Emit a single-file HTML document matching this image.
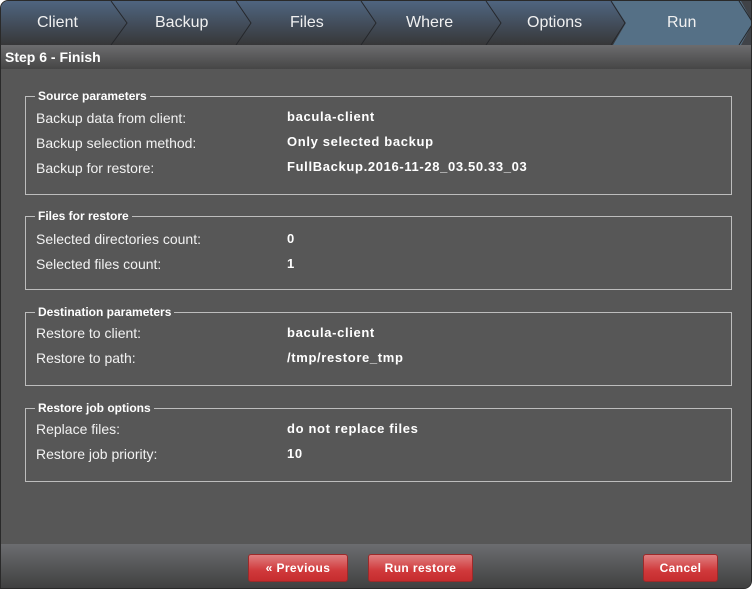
<!DOCTYPE html>
<html><head><style>
*{margin:0;padding:0;box-sizing:border-box}
body{width:753px;height:589px;background:#fff;font-family:"Liberation Sans",sans-serif;overflow:hidden;position:relative}
#win{position:absolute;left:0;top:0;width:752px;height:589px;background:#575757;border:1px solid #2a2a2a;border-radius:8px 0 8px 0;overflow:hidden}
#tabs{position:absolute;left:0;top:0;width:752px;height:44px}
#hdr{position:absolute;left:0;top:44px;width:752px;height:24px;background:linear-gradient(#6c6c6e,#464646);color:#fff;font-weight:bold;font-size:14px;padding:4px 0 0 4px}
.fs{position:absolute;left:24px;width:707px;border:1px solid #bdbdbd}
.lg{position:absolute;top:-9px;left:9px;background:#575757;padding:0 3px;color:#fff;font-weight:bold;font-size:12px;line-height:16px}
.row{position:absolute;left:10px;color:#f2f2f2;font-size:14px;line-height:16px}
.v{position:absolute;left:261px;color:#fff;font-weight:bold;font-size:13px;line-height:16px;white-space:nowrap;letter-spacing:0.65px}
#foot{position:absolute;left:0;top:543px;width:752px;height:46px;background:linear-gradient(#6c6d70,#3e3e3e)}
.btn{position:absolute;top:10px;height:28px;border:1px solid #9c2a2a;border-radius:3px;background:linear-gradient(#e07f80,#d0393b 60%,#c62c2e);color:#fff;font-weight:bold;font-size:12px;letter-spacing:0.4px;text-align:center;line-height:26px}
</style></head><body>
<div id="win">
<svg id="tabs" width="752" height="44">
<defs><linearGradient id="g" x1="0" y1="0" x2="0" y2="1"><stop offset="0" stop-color="#4f6580"/><stop offset="1" stop-color="#373738"/></linearGradient></defs>
<rect width="752" height="44" fill="url(#g)"/>
<polygon points="611,0 745,0 752,0 752,44 625,44 612,44 625,22" fill="#557086"/>
<polygon points="740,0 752,0 752,44 740,44 752,22" fill="#404348"/>
<g stroke="#25272b" stroke-width="1" fill="none">
<path d="M110,0 L126,22 L110,44"/><path d="M235,0 L250,22 L235,44"/><path d="M360,0 L375,22 L360,44"/><path d="M485,0 L500,22 L485,44"/><path d="M610,0 L624,22 L610,44"/><path d="M738,0 L752,22 L738,44"/>
</g>
<g fill="#f0f0f0" font-family="Liberation Sans" font-size="16">
<text x="36" y="26">Client</text><text x="154" y="26">Backup</text><text x="289" y="26">Files</text><text x="405" y="26">Where</text><text x="526" y="26">Options</text><text x="666" y="26">Run</text>
</g></svg>
<div id="hdr">Step 6 - Finish</div>
<div class="fs" style="top:95px;height:99px"><span class="lg">Source parameters</span>
<div class="row" style="top:13px">Backup data from client:</div><div class="v" style="top:12px">bacula-client</div>
<div class="row" style="top:38px">Backup selection method:</div><div class="v" style="top:37px">Only selected backup</div>
<div class="row" style="top:63px">Backup for restore:</div><div class="v" style="top:62px">FullBackup.2016-11-28_03.50.33_03</div></div>
<div class="fs" style="top:215px;height:74px"><span class="lg">Files for restore</span>
<div class="row" style="top:14px">Selected directories count:</div><div class="v" style="top:14px">0</div>
<div class="row" style="top:39px">Selected files count:</div><div class="v" style="top:39px">1</div></div>
<div class="fs" style="top:311px;height:74px"><span class="lg">Destination parameters</span>
<div class="row" style="top:12px">Restore to client:</div><div class="v" style="top:12px">bacula-client</div>
<div class="row" style="top:37px">Restore to path:</div><div class="v" style="top:37px">/tmp/restore_tmp</div></div>
<div class="fs" style="top:407px;height:74px"><span class="lg">Restore job options</span>
<div class="row" style="top:12px">Replace files:</div><div class="v" style="top:12px">do not replace files</div>
<div class="row" style="top:37px">Restore job priority:</div><div class="v" style="top:37px">10</div></div>
<div id="foot">
<div class="btn" style="left:247px;width:100px">« Previous</div>
<div class="btn" style="left:367px;width:105px">Run restore</div>
<div class="btn" style="left:642px;width:75px">Cancel</div>
</div>
</div>
</body></html>
